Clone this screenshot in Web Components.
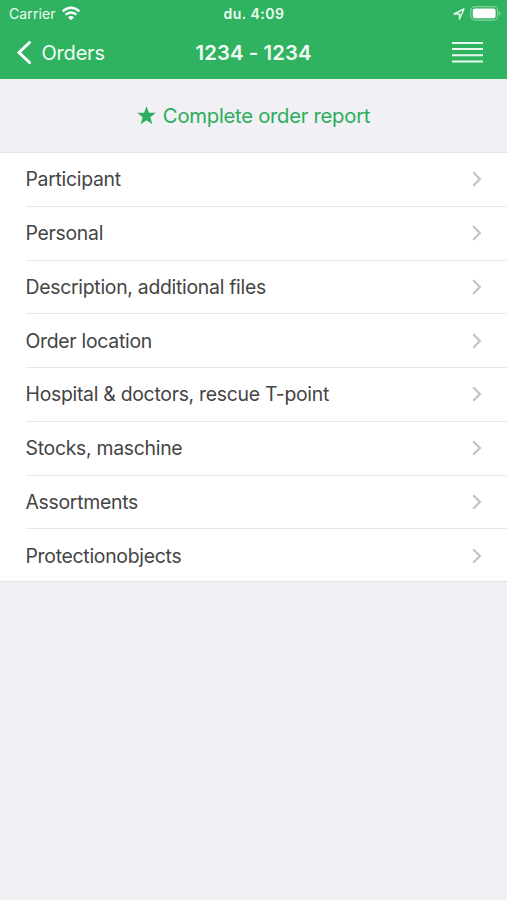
<!DOCTYPE html>
<html lang="en"><head><meta charset="utf-8"><title>Orders</title>
<style>html,body{margin:0;height:100%;background:#f0f0f5}body{font-family:Inter,"Liberation Sans",sans-serif;color:#444}</style></head>
<body><order-screen></order-screen>
<script>
const define=(name,html)=>customElements.define(name,class extends HTMLElement{
  constructor(){super();const t=document.createElement('template');t.innerHTML=html;this.attachShadow({mode:'open'}).append(t.content.cloneNode(true));}
});
define('status-bar',`<style>
:host{display:grid;grid-template-columns:1fr auto 1fr;align-items:center;height:27px;padding:0 6px 0 9px;box-sizing:border-box;color:#eefbf1;font-size:14px;line-height:27px}
.left,.right{display:flex;align-items:center;gap:5px}.right{justify-content:flex-end}
.left span{letter-spacing:.12px}.time{font-weight:600;letter-spacing:.5px;margin-left:-2px}svg{display:block}
</style><div class="left"><span>Carrier</span><svg width="20" height="15" viewBox="0 0 20 15"><g fill="none" stroke="#fff" stroke-width="2.4"><path d="M1.6 5.4Q10-1.8 18.4 5.4"/><path d="M4.6 8.7Q10 4.2 15.4 8.7"/></g><path d="M7 11.2Q10 8.8 13 11.2L10 14.2Z" fill="#fff"/></svg></div>
<span class="time">du. 4:09</span>
<div class="right"><svg width="12" height="12" viewBox="0 0 12 12"><path d="M1 6 11 1 6.5 11V6Z" fill="none" stroke="#e5f8ea" stroke-width="1.4" stroke-linejoin="round"/></svg><svg width="31" height="15" viewBox="0 0 31 15"><rect x=".7" y=".7" width="27" height="13.4" rx="4.2" fill="none" stroke="#82d19c" stroke-width="1.2"/><rect x="2.8" y="2.6" width="22.8" height="9.6" rx="2.2" fill="#fff"/><path d="M29 5Q32 7.4 29 9.8Z" fill="#82d19c"/></svg></div>`);
define('nav-bar',`<style>
:host{display:grid;grid-template-columns:1fr auto 1fr;align-items:center;height:52px;padding:0 24px 1px 16px;box-sizing:border-box;color:#f2fcf4;font-size:20px}
.back{display:flex;align-items:center;gap:9.5px}.back span{letter-spacing:-.2px}.title{font-weight:600;font-size:20.3px;letter-spacing:.1px;margin-left:8px}.menu{justify-self:end}svg{display:block}
</style><div class="back"><svg width="16" height="26" viewBox="0 0 16 26"><path d="M13.5 2.5 3 12.5 13.5 22.5" fill="none" stroke="#fff" stroke-width="3" stroke-linecap="round"/></svg><span><slot name="back"></slot></span></div><span class="title"><slot></slot></span><svg class="menu" width="31" height="22" viewBox="0 0 31 22"><path d="M0 1H31M0 7H31M0 13.3H31M0 19.5H31" stroke="#e8faed" stroke-width="2"/></svg>`);
define('report-action',`<style>
:host{display:flex;align-items:center;justify-content:center;gap:7px;height:73px;color:#2bad5c;font-size:20.3px;letter-spacing:-.28px;box-sizing:border-box}svg{display:block}
</style><svg width="19" height="19" viewBox="0 0 20 20"><path d="m10 .3 2.5 6.9h7.3l-5.8 4.6 2.2 7.3L10 14.9l-6.2 4.2L6 11.8.2 7.2h7.3Z" fill="#2bad5c"/></svg><span><slot></slot></span>`);
define('menu-row',`<style>
:host{display:block;height:53.75px;padding-left:25.5px;box-sizing:border-box;font-size:19.4px;letter-spacing:-.28px}
.row{display:flex;align-items:center;justify-content:space-between;height:100%;padding-right:25px;padding-top:.2px;border-bottom:1px solid #e7e7e9;box-sizing:border-box}
:host(:last-of-type) .row{border-bottom:0;padding-bottom:1px}svg{display:block}
</style><div class="row"><span><slot></slot></span><svg width="10" height="16" viewBox="0 0 10 16"><path d="m1.2 1.3 6.7 6.7-6.7 6.7" fill="none" stroke="#c3c3c5" stroke-width="2.2"/></svg></div>`);
define('menu-list',`<style>:host{display:block;background:#fff;border-block:1px solid #e4e4e7;height:430px;box-sizing:border-box}</style><slot></slot>`);
define('order-screen',`<style>:host{display:block;height:100vh;overflow:hidden}header{background:#2fb361}</style>
<header><status-bar></status-bar><nav-bar><span slot="back">Orders</span>1234 - 1234</nav-bar></header>
<report-action>Complete order report</report-action>
<menu-list><menu-row>Participant</menu-row><menu-row>Personal</menu-row><menu-row>Description, additional files</menu-row><menu-row>Order location</menu-row><menu-row>Hospital &amp; doctors, rescue T-point</menu-row><menu-row>Stocks, maschine</menu-row><menu-row>Assortments</menu-row><menu-row>Protectionobjects</menu-row></menu-list>`);
</script></body></html>
